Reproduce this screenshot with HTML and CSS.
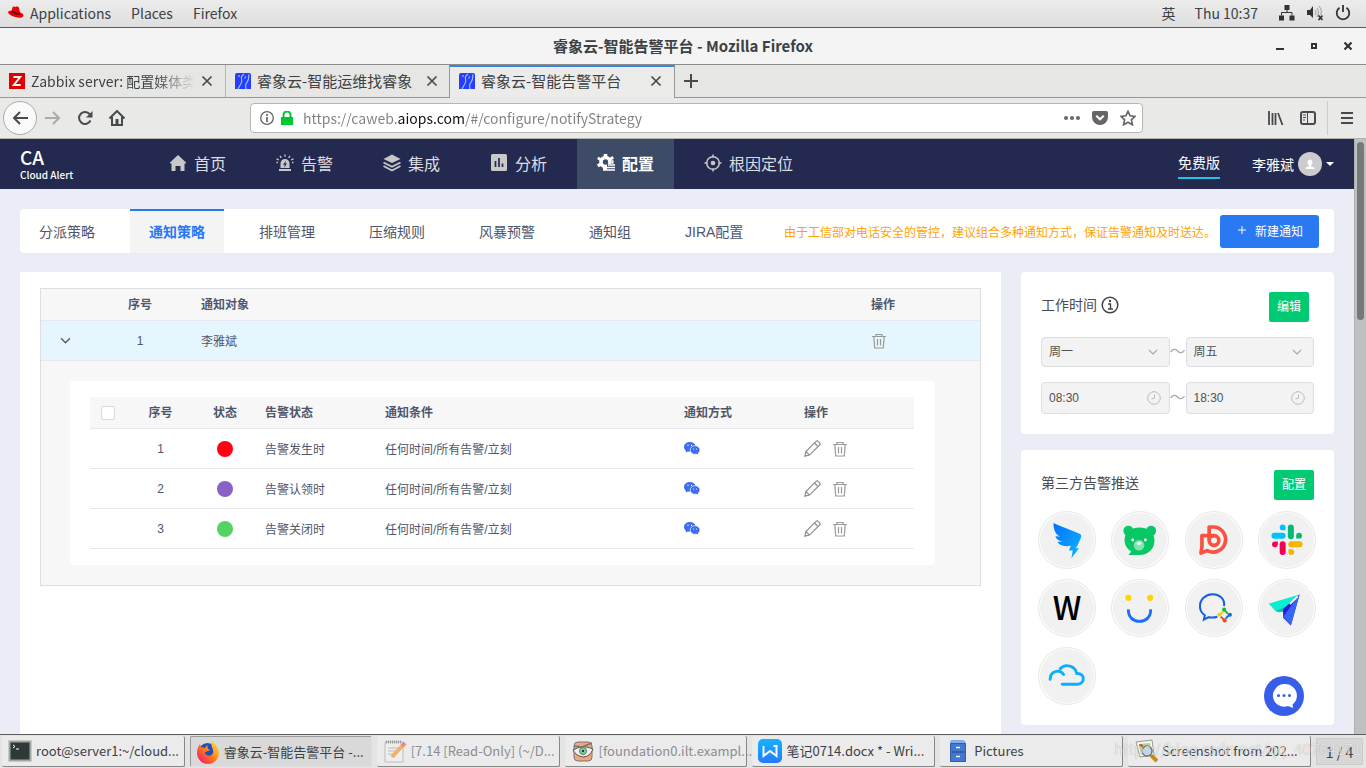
FILE: index.html
```
<!DOCTYPE html>
<html lang="zh-CN">
<head>
    <meta charset="UTF-8">
    <meta name="viewport" content="width=device-width, initial-scale=1.0">
    <title>睿象云-智能告警平台</title>
    <link rel="stylesheet" href="styles.css">
</head>
<body>
    <!-- shared icons -->
    <svg class="symbols" aria-hidden="true">
        <symbol id="i-trash" viewBox="0 0 16 16"><path d="M1 3.5h14M5 3V1.5h6V3M2.8 3.5l.9 11.5h8.6l.9-11.5M6.5 6v6.5M9.5 6v6.5" fill="none" stroke="#999" stroke-width="1.2"/></symbol>
        <symbol id="i-edit" viewBox="0 0 16 16"><path d="M.8 15.2l1-4.4L11.3 1.3q1-1 2 0l1.4 1.4q1 1 0 2L5.2 14.2zM9.8 2.8l3.4 3.4M1.8 10.8l3.4 3.4" fill="none" stroke="#8c8c8c" stroke-width="1.1"/></symbol>
        <symbol id="i-wechat" viewBox="0 0 16 13"><path d="M5.8 0C2.500 0 0 2.200 0 5c0 1.600.8 2.900 2 3.800L1.600 10.500l2.200-1.100q1 .3 2 .3 0-5.500 5.800-6.100C10.800 1.400 8.500 0 5.800 0z" fill="#3f6df0"/><ellipse cx="11" cy="8" rx="4.900" ry="4.200" fill="#3f6df0" stroke="#fff" stroke-width=".5"/><path d="M12 11.500l2.200 1.300-.5-2z" fill="#3f6df0"/><g fill="#fff"><circle cx="4" cy="3.300" r=".7"/><circle cx="7.500" cy="3.300" r=".7"/><circle cx="9.400" cy="7" r=".6"/><circle cx="12.500" cy="7" r=".6"/></g></symbol>
        <symbol id="i-close" viewBox="0 0 12 12"><path d="M1.500 1.500l9 9M10.500 1.500l-9 9" fill="none" stroke="#474b4c" stroke-width="1.700"/></symbol>
        <symbol id="i-ruixiang" viewBox="0 0 16 16"><path d="M2 0h12q2 0 2 2v14H0V2q0-2 2-2z" fill="#2c3cff"/><path d="M3 16C5 12 8 9 6.500 6 6 4.500 7 2.500 9 1M9.500 5.500l1.500-2M13.500 1.500C15 6 12 9 11 11c-.7 1.500-.3 3 0 5" fill="none" stroke="#8ed3ff" stroke-width="1.100"/><circle cx="4" cy="3" r=".7" fill="#fff"/></symbol>
        <symbol id="i-down" viewBox="0 0 10 10"><path d="M1 3l4 4 4-4" fill="none" stroke="currentColor" stroke-width="1.200"/></symbol>
        <symbol id="i-clock" viewBox="0 0 14 14"><circle cx="7" cy="7" r="6.300" fill="none" stroke="#b8bbc4"/><path d="M7.500 3.500v4h-3" fill="none" stroke="#b8bbc4"/></symbol>
    </svg>

    <!-- desktop top bar -->
    <header class="desktop-bar">
        <nav class="desktop-menu">
            <button type="button">
                <svg width="16" height="13" viewBox="0 0 16 13"><path d="M4.500 1.500C5 .2 6 .5 7.500 1c1-.8 3-.3 3.500.8l1 4.400c2.500 1 3.800 2.400 3.400 3.700-.5 1.800-4 2.200-7.400 1.300C3.500 10.200-.2 7.800.2 6c.2-1 1.500-1.500 3.300-1.300z" fill="#f00000"/><path d="M3.700 4.800c1.200 2 5.500 3.600 8.100 2.700" fill="none" stroke="#222" stroke-width="1.500"/></svg>
                Applications
            </button>
            <button type="button">Places</button>
            <button type="button">Firefox</button>
        </nav>
        <div class="desktop-status">
            <span>英</span>
            <time>Thu 10:37</time>
            <svg width="16" height="16" viewBox="0 0 16 16"><path d="M5.500 0h5v5h-5zM0 10.500h5v5H0zM10.500 10.500h5v5h-5z" fill="#2e3436"/><path d="M8 5v3M2.500 10.500V7.500h10.500v3" fill="none" stroke="#2e3436"/></svg>
            <svg width="16" height="16" viewBox="0 0 16 16"><path d="M0 5h3l3-4v12L3 10H0z" fill="#2e3436"/><path d="M8 5q2 2.500 0 5M10 3q3 4 0 9M12 1q4 5 1.500 9" fill="none" stroke="#aaa" stroke-width="1.200"/><path d="M11.500 10.500l4 4.500M15.500 10.500l-4 4.500" stroke="#2e3436" stroke-width="1.800"/></svg>
            <svg width="16" height="16" viewBox="0 0 16 16"><path d="M4.500 2.800a6.300 6.300 0 1 0 7 0M8 0v7" fill="none" stroke="#2e3436" stroke-width="1.800"/></svg>
        </div>
    </header>

    <!-- window title -->
    <div class="title-bar">
        <h1>睿象云-智能告警平台 - Mozilla Firefox</h1>
        <div class="window-buttons">
            <button type="button" aria-label="Minimize"><svg width="10" height="10" viewBox="0 0 10 10"><path d="M1 8h8" stroke="#2e3436" stroke-width="2"/></svg></button>
            <button type="button" aria-label="Maximize"><svg width="10" height="10" viewBox="0 0 10 10"><path d="M3 3h4v4H3z" fill="none" stroke="#2e3436" stroke-width="2"/></svg></button>
            <button type="button" aria-label="Close"><svg width="10" height="10" viewBox="0 0 10 10"><path d="M1.500 1.500l7 7M8.500 1.500l-7 7" stroke="#2e3436" stroke-width="2.200"/></svg></button>
        </div>
    </div>

    <!-- browser tabs -->
    <div class="browser-tabs">
        <div class="browser-tab">
            <svg width="16" height="16" viewBox="0 0 16 16"><path d="M0 0h16v16H0z" fill="#e00000"/><path d="M4.500 4h6.800L4.800 12h6.900" fill="none" stroke="#fff" stroke-width="1.900"/></svg>
            <span class="tab-title faded">Zabbix server: 配置媒体类</span>
            <button type="button" aria-label="Close tab"><svg width="12" height="12"><use href="#i-close"/></svg></button>
        </div>
        <div class="browser-tab divided">
            <svg width="16" height="16"><use href="#i-ruixiang"/></svg>
            <span class="tab-title">睿象云-智能运维找睿象</span>
            <button type="button" aria-label="Close tab"><svg width="12" height="12"><use href="#i-close"/></svg></button>
        </div>
        <div class="browser-tab current">
            <svg width="16" height="16"><use href="#i-ruixiang"/></svg>
            <span class="tab-title">睿象云-智能告警平台</span>
            <button type="button" aria-label="Close tab"><svg width="12" height="12"><use href="#i-close"/></svg></button>
        </div>
        <button type="button" class="new-tab" aria-label="New tab"><svg width="14" height="14" viewBox="0 0 14 14"><path d="M7 0v14M0 7h14" stroke="#474b4c" stroke-width="2"/></svg></button>
    </div>

    <!-- browser toolbar -->
    <div class="toolbar">
        <div class="nav-buttons">
            <button type="button" class="back" aria-label="Back"><svg width="16" height="16" viewBox="0 0 16 16"><path d="M16 8H2M8 2L2 8l6 6" fill="none" stroke="#474b4c" stroke-width="2"/></svg></button>
            <button type="button" aria-label="Forward"><svg width="16" height="16" viewBox="0 0 16 16"><path d="M0 8h14M8 2l6 6-6 6" fill="none" stroke="#aaa" stroke-width="2"/></svg></button>
            <button type="button" aria-label="Reload"><svg width="16" height="16" viewBox="0 0 16 16"><path d="M13 4.500A6 6 0 1 0 13.500 10.500" fill="none" stroke="#474b4c" stroke-width="2"/><path d="M15.500 1v6.500H9z" fill="#474b4c"/></svg></button>
            <button type="button" aria-label="Home"><svg width="16" height="16" viewBox="0 0 16 16"><path d="M0.500 8.500L8 1l7.500 7.500M3 7v8h10V7" fill="none" stroke="#474b4c" stroke-width="2"/><path d="M6.500 9h3v6h-3z" fill="#474b4c"/></svg></button>
        </div>
        <div class="url-bar">
            <svg width="14" height="14" viewBox="0 0 14 14"><circle cx="7" cy="7" r="6.300" fill="none" stroke="#666" stroke-width="1.300"/><path d="M7 6v5M7 3v2" stroke="#666" stroke-width="1.700"/></svg>
            <svg width="12" height="14" viewBox="0 0 12 14"><path d="M0 6h12v8H0z" fill="#00c832"/><path d="M2.500 6.500V4a3.500 3.500 0 0 1 7 0v2.500" fill="none" stroke="#00c832" stroke-width="2"/></svg>
            <input type="text" aria-label="Address" value="https://caweb.aiops.com/#/configure/notifyStrategy">
            <button type="button" aria-label="Page actions"><svg width="16" height="16" viewBox="0 0 16 16"><g fill="#666"><circle cx="2" cy="8" r="2"/><circle cx="8" cy="8" r="2"/><circle cx="14" cy="8" r="2"/></g></svg></button>
            <button type="button" aria-label="Pocket"><svg width="16" height="16" viewBox="0 0 16 16"><path d="M1.500 1h13Q16 1 16 2.500V7A8 8 0 0 1 0 7V2.500Q0 1 1.500 1z" fill="#666"/><path d="M4.300 5.800L8 9.300l3.700-3.500" fill="none" stroke="#fff" stroke-width="2"/></svg></button>
            <button type="button" aria-label="Bookmark"><svg width="16" height="16" viewBox="0 0 16 16"><path d="M8 1.300l2.100 4.500 4.900.6-3.600 3.400 1 4.900L8 12.300l-4.400 2.400 1-4.900L1 6.400l4.900-.6z" fill="none" stroke="#666" stroke-width="1.700"/></svg></button>
        </div>
        <div class="tool-buttons">
            <button type="button" aria-label="Library"><svg width="16" height="16" viewBox="0 0 16 16"><path d="M1 1v14M4.500 3v12M7.500 3v12M10 3l4.500 12" fill="none" stroke="#474b4c" stroke-width="1.800"/></svg></button>
            <button type="button" aria-label="Sidebars"><svg width="16" height="16" viewBox="0 0 16 16"><rect x="1" y="2" width="14" height="12" rx="2" fill="none" stroke="#474b4c" stroke-width="2"/><path d="M7.500 2v12M3 5h3M3 7.500h3M3 10h2" stroke="#474b4c"/></svg></button>
            <button type="button" class="menu" aria-label="Menu"><svg width="14" height="14" viewBox="0 0 14 14"><path d="M1 2h12M1 7h12M1 12h12" stroke="#474b4c" stroke-width="2"/></svg></button>
        </div>
    </div>

    <!-- web page -->
    <div class="viewport">
        <div class="page">
            <header class="app-header">
                <a class="logo" href="#"><strong>CA</strong><span>Cloud Alert</span></a>
                <nav class="app-nav">
                    <a href="#"><svg width="18" height="18" viewBox="0 0 18 18"><path d="M9 1l8 7.500v1h-1.500V17h-4v-5h-5v5h-4V9.500H1v-1z" fill="#c8c8c8"/></svg>首页</a>
                    <a href="#"><svg width="18" height="18" viewBox="0 0 18 18"><path d="M4.500 14V9.500a4.500 4.500 0 0 1 9 0V14zM3 15h12v2H3z" fill="#c8c8c8"/><path d="M9 .5v2.300M4 1.800l1.300 2M14 1.800l-1.300 2M.5 4.800l2.300 1M17.500 4.800l-2.300 1M.5 8.500h1.500M16 8.500h1.500" stroke="#c8c8c8" stroke-width="1.300"/><path d="M10.200 6.500L7 10.800h1.800L8 14l3-4.500H9.300z" fill="#24294f"/></svg>告警</a>
                    <a href="#"><svg width="18" height="18" viewBox="0 0 18 18"><path d="M9 .5l8.500 4.500L9 9 .5 5z" fill="#c8c8c8"/><path d="M.5 8.500L9 12.800l8.500-4.300M.5 12L9 16.500 17.500 12" fill="none" stroke="#c8c8c8" stroke-width="1.800"/></svg>集成</a>
                    <a href="#"><svg width="18" height="18" viewBox="0 0 18 18"><rect x="1" y="0" width="16" height="17" rx="1.500" fill="#c8c8c8"/><path d="M5.500 7v6M9 4v9M12.500 9.500V13" stroke="#24294f" stroke-width="1.700"/></svg>分析</a>
                    <a href="#" class="active"><svg width="18" height="18" viewBox="0 0 18 18"><circle cx="8.500" cy="8" r="4.500" fill="none" stroke="#fff" stroke-width="3.600"/><g stroke="#fff" stroke-width="3.500"><path d="M6.700 1.500h3.600M1.800 6l1-2.500M14 3l1.500 2.500M1.500 9.500L3 12.500M6 15h4M15 8h1.500"/></g><path d="M10 10h8v7h-8z" fill="#3d4b66"/><path d="M11 11h7M10 13.500h8M10 16h8" stroke="#fff" stroke-width="1.300"/></svg>配置</a>
                    <a href="#"><svg width="18" height="18" viewBox="0 0 18 18"><circle cx="9" cy="9" r="6.300" fill="none" stroke="#c8c8c8" stroke-width="1.500"/><circle cx="9" cy="9" r="2.300" fill="#c8c8c8"/><path d="M9 .5v3M9 14.500v3M.5 9h3M14.500 9h3" stroke="#c8c8c8" stroke-width="1.500"/></svg>根因定位</a>
                </nav>
                <div class="account">
                    <a class="plan" href="#">免费版</a>
                    <button type="button" class="user">
                        李雅斌
                        <svg width="24" height="24" viewBox="0 0 24 24"><circle cx="12" cy="12" r="12" fill="#ccc"/><path d="M12 7.500c3 0 3 4.500 1 6v1c2 .3 3.500.8 3.500 2.500h-9c0-1.700 1.500-2.200 3.500-2.500v-1c-2-1.500-2-6 1-6z" fill="#fff"/></svg>
                        <span class="caret"></span>
                    </button>
                </div>
            </header>

            <main>
                <div class="sub-nav">
                    <nav>
                        <a href="#">分派策略</a>
                        <a href="#" class="active">通知策略</a>
                        <a href="#">排班管理</a>
                        <a href="#">压缩规则</a>
                        <a href="#">风暴预警</a>
                        <a href="#">通知组</a>
                        <a href="#">JIRA配置</a>
                    </nav>
                    <p>由于工信部对电话安全的管控，建议组合多种通知方式，保证告警通知及时送达。</p>
                    <button type="button" class="btn-primary"><svg width="8" height="8" viewBox="0 0 8 8"><path d="M4 0v8M0 4h8" stroke="#fff"/></svg>新建通知</button>
                </div>

                <div class="columns">
                    <section class="panel">
                        <table class="outer-table">
                            <colgroup><col class="c-expand"><col class="c-no"><col><col class="c-ops"></colgroup>
                            <thead>
                                <tr><th></th><th class="center">序号</th><th>通知对象</th><th>操作</th></tr>
                            </thead>
                            <tbody>
                                <tr class="selected">
                                    <td class="center"><button type="button" class="icon-btn" aria-label="收起"><svg width="11" height="11"><use href="#i-down"/></svg></button></td>
                                    <td class="center">1</td>
                                    <td>李雅斌</td>
                                    <td><button type="button" class="icon-btn" aria-label="删除"><svg width="16" height="16"><use href="#i-trash"/></svg></button></td>
                                </tr>
                                <tr class="expanded">
                                    <td colspan="4">
                                        <div class="inner-panel">
                                            <table class="inner-table">
                                                <colgroup><col class="c-check"><col class="c-num"><col class="c-dot"><col class="c-mid"><col><col class="c-mid"><col class="c-mid"></colgroup>
                                                <thead>
                                                    <tr><th class="check"><input type="checkbox" aria-label="全选"></th><th class="center">序号</th><th class="center">状态</th><th>告警状态</th><th>通知条件</th><th>通知方式</th><th>操作</th></tr>
                                                </thead>
                                                <tbody>
                                                    <tr>
                                                        <td></td><td class="center">1</td><td class="center"><span class="dot red"></span></td><td>告警发生时</td><td>任何时间/所有告警/立刻</td>
                                                        <td><svg width="16" height="13"><use href="#i-wechat"/></svg></td>
                                                        <td><div class="ops"><button type="button" class="icon-btn" aria-label="编辑"><svg width="17" height="17"><use href="#i-edit"/></svg></button><button type="button" class="icon-btn" aria-label="删除"><svg width="16" height="16"><use href="#i-trash"/></svg></button></div></td>
                                                    </tr>
                                                    <tr>
                                                        <td></td><td class="center">2</td><td class="center"><span class="dot purple"></span></td><td>告警认领时</td><td>任何时间/所有告警/立刻</td>
                                                        <td><svg width="16" height="13"><use href="#i-wechat"/></svg></td>
                                                        <td><div class="ops"><button type="button" class="icon-btn" aria-label="编辑"><svg width="17" height="17"><use href="#i-edit"/></svg></button><button type="button" class="icon-btn" aria-label="删除"><svg width="16" height="16"><use href="#i-trash"/></svg></button></div></td>
                                                    </tr>
                                                    <tr>
                                                        <td></td><td class="center">3</td><td class="center"><span class="dot green"></span></td><td>告警关闭时</td><td>任何时间/所有告警/立刻</td>
                                                        <td><svg width="16" height="13"><use href="#i-wechat"/></svg></td>
                                                        <td><div class="ops"><button type="button" class="icon-btn" aria-label="编辑"><svg width="17" height="17"><use href="#i-edit"/></svg></button><button type="button" class="icon-btn" aria-label="删除"><svg width="16" height="16"><use href="#i-trash"/></svg></button></div></td>
                                                    </tr>
                                                </tbody>
                                            </table>
                                        </div>
                                    </td>
                                </tr>
                            </tbody>
                        </table>
                    </section>

                    <aside>
                        <section class="card work-time">
                            <div class="card-head">
                                <h2>工作时间 <svg width="18" height="18" viewBox="0 0 18 18"><circle cx="9" cy="9" r="7.800" fill="none" stroke="#444" stroke-width="1.500"/><path d="M7 8h2.500v5M7 13h5" fill="none" stroke="#444" stroke-width="1.400"/><circle cx="9" cy="5" r="1.200" fill="#444"/></svg></h2>
                                <button type="button" class="btn-green">编辑</button>
                            </div>
                            <div class="range">
                                <label class="field"><select aria-label="开始日"><option>周一</option></select><svg width="10" height="10"><use href="#i-down"/></svg></label>
                                <span>～</span>
                                <label class="field"><select aria-label="结束日"><option>周五</option></select><svg width="10" height="10"><use href="#i-down"/></svg></label>
                            </div>
                            <div class="range times">
                                <label class="field"><input type="text" aria-label="开始时间" value="08:30"><svg width="14" height="14"><use href="#i-clock"/></svg></label>
                                <span>～</span>
                                <label class="field"><input type="text" aria-label="结束时间" value="18:30"><svg width="14" height="14"><use href="#i-clock"/></svg></label>
                            </div>
                        </section>

                        <section class="card push">
                            <div class="card-head">
                                <h2>第三方告警推送</h2>
                                <button type="button" class="btn-green">配置</button>
                            </div>
                            <div class="apps">
                                <!-- dingtalk -->
                                <a href="#" aria-label="钉钉"><svg viewBox="0 0 58 58"><defs><linearGradient id="ding" x1="0" y1="0" x2="1" y2="1"><stop offset="0" stop-color="#0070ff"/><stop offset="1" stop-color="#10b8ff"/></linearGradient></defs><path d="M15 11.500c8 4 18 7 27 11 2 1 2 2 1.500 4l-3.500 8-2 3h3.500L33.500 48l1.500-8h-4l2-5c-6 1-11 0-14-4l6-1c-5 0-7-2-8-5l5 .5c-5-2-7-7-7-14z" fill="url(#ding)"/></svg></a>
                                <!-- bear -->
                                <a href="#" aria-label="倍洽"><svg viewBox="0 0 58 58"><g fill="#07c864"><circle cx="17" cy="19.500" r="5.200"/><circle cx="40.500" cy="19.500" r="5.200"/><path d="M28.500 16C38 16 44 21 44 29.500S38 44.500 28 44.500H17l3-3.500c-4.500-3-7-7-7-11.500C13 21 19 16 28.500 16z"/></g><circle cx="28" cy="34.500" r="5.500" fill="#83e2b1"/><ellipse cx="28" cy="32.500" rx="2.500" ry="1.500" fill="#fff"/><circle cx="21.500" cy="29" r="1.500" fill="#fff"/><circle cx="34.500" cy="29" r="1.500" fill="#fff"/></svg></a>
                                <!-- red chat -->
                                <a href="#" aria-label="即时通讯"><svg viewBox="0 0 58 58"><path d="M24 29V15.500h5A13 13 0 1 1 22 40l-6.500 2.500L16.500 36V24.500H29" fill="none" stroke="#fb5140" stroke-width="3.800" stroke-linejoin="round"/><circle cx="29" cy="29.500" r="5" fill="none" stroke="#fb5140" stroke-width="3.800"/></svg></a>
                                <!-- slack -->
                                <a href="#" aria-label="Slack"><svg viewBox="0 0 58 58"><g fill="none" stroke-width="6.200" stroke-linecap="round"><path d="M16 24.500h8.500" stroke="#00c2f8"/><path d="M33 16v9" stroke="#07b979"/><path d="M33.500 33.500h8.500" stroke="#f4b400"/><path d="M24.500 33.500v8" stroke="#f60055"/></g><path d="M21.500 16a3 3 0 0 1 6 0v3h-3a3 3 0 0 1-3-3z" fill="#00c2f8"/><path d="M38.500 27.500v-3a3 3 0 1 1 3 3z" fill="#07b979"/><path d="M30.500 38.500h3a3 3 0 1 1-3 3z" fill="#f4b400"/><path d="M19.500 30.500v3a3 3 0 1 1-3-3z" fill="#f60055"/></svg></a>
                                <a href="#" aria-label="W" class="letter">W</a>
                                <!-- smile -->
                                <a href="#" aria-label="有度"><svg viewBox="0 0 58 58"><circle cx="17" cy="18.500" r="3.200" fill="#ffd400"/><circle cx="39.500" cy="18.500" r="3.200" fill="#ffd400"/><path d="M17 30.500c-1 16.500 24 16.500 23 0" fill="none" stroke="#176fff" stroke-width="3"/></svg></a>
                                <!-- wecom -->
                                <a href="#" aria-label="企业微信"><svg viewBox="0 0 58 58"><path d="M39.500 27C41 10 13.500 11 14.500 28c.2 4 2 6.500 5 8.500l-1 4.500 5-2.500q5 1 9-.5" fill="none" stroke="#175ee5" stroke-width="2.100"/><path d="M35 36l4-4" stroke="#f8cc00" stroke-width="2"/><path d="M39.500 31l4 4" stroke="#16bd29" stroke-width="2"/><path d="M45 36l-4 4" stroke="#1768e5" stroke-width="2"/><path d="M36 38l4 4" stroke="#f74323" stroke-width="2"/><circle cx="34.500" cy="36" r="2.100" fill="#f8cc00"/><circle cx="39.500" cy="30.500" r="2.100" fill="#16bd29"/><circle cx="45.500" cy="36" r="2.100" fill="#1768e5"/><circle cx="40" cy="42" r="2.100" fill="#f74323"/></svg></a>
                                <!-- feishu -->
                                <a href="#" aria-label="飞书"><svg viewBox="0 0 58 58"><path d="M10 24.500L42 15 27 31q-5 4-10 1z" fill="#08efd1"/><path d="M17 32l16-7-6 7q-5 2-10 0z" fill="#00cba8"/><path d="M25 30l17-15-9 32-8-8z" fill="#2819d8"/><path d="M42 15L25 38l8 9z" fill="#3467f5"/><path d="M32 25l8-8" stroke="#fff" stroke-width="2"/></svg></a>
                                <!-- cloud -->
                                <a href="#" aria-label="云之家"><svg viewBox="0 0 58 58"><path d="M11.500 32.500c0-9 10-11 14-5M22 21.500c5-6 16-3 17 5 9-1 9 11 1 11H24" fill="none" stroke="#0daeff" stroke-width="3" stroke-linecap="round" stroke-linejoin="round"/></svg></a>
                            </div>
                        </section>
                    </aside>
                </div>
            </main>
            <button type="button" class="chat-btn" aria-label="在线客服"><svg width="40" height="40" viewBox="0 0 40 40"><path d="M28.500 28.500l.5 3.500-5-2q-5 1.800-10-1a12 11.500 0 1 1 14.500-.5z" fill="#fff"/><g fill="#375ee9"><circle cx="14.500" cy="19.500" r="1.500"/><circle cx="20" cy="19.500" r="1.500"/><circle cx="25.500" cy="19.500" r="1.500"/></g></svg></button>
        </div>
        <div class="scrollbar"><div class="thumb"></div></div>
    </div>

    <!-- window list -->
    <footer class="taskbar">
        <button type="button" class="task"><svg width="24" height="24" viewBox="0 0 24 24"><path d="M1.500 2.500h21v19h-21z" fill="#2e3a3a" stroke="#a5a59f" stroke-width="2"/><path d="M5 6l2 1.500L5 9M8 10h3" fill="none" stroke="#fff"/></svg><span>root@server1:~/cloud...</span></button>
        <button type="button" class="task pressed"><svg width="24" height="24" viewBox="0 0 24 24"><defs><linearGradient id="fox" x1="1" y1="0" x2="0" y2="1"><stop offset="0" stop-color="#fff44f"/><stop offset=".5" stop-color="#ff7b1c"/><stop offset="1" stop-color="#f0037f"/></linearGradient></defs><circle cx="11.500" cy="12" r="9" fill="#1f4fb8"/><path d="M16 1c2 2 7 6 7 12a11 11 0 0 1-22 0c0-4 1-6 3-9l1 3 4 1 2-3c1 2 0 4 3 5-2 2-5 1-5 3 2 4 7 3 8 0 1-5-3-6-1-12z" fill="url(#fox)"/></svg><span>睿象云-智能告警平台 -...</span></button>
        <button type="button" class="task dimmed"><svg width="24" height="24" viewBox="0 0 24 24"><path d="M2 3h18v20H2z" fill="#eee" stroke="#bbb"/><path d="M3 3h16" stroke="#999" stroke-width="3" stroke-dasharray="1 1"/><path d="M5 9h11M5 12h9M5 15h7" stroke="#bbb"/><path d="M9 18L20 6" stroke="#f1b267" stroke-width="4"/><path d="M19 7l3-3" stroke="#e58b88" stroke-width="4"/></svg><span>[7.14 [Read-Only] (~/D...</span></button>
        <button type="button" class="task dimmed"><svg width="24" height="24" viewBox="0 0 24 24"><rect x="3" y="3" width="18" height="19" rx="4" fill="#f3a57e" stroke="#777"/><path d="M2 11q10-6 20-1-3 8-10 8Q5 17 2 11z" fill="#eee" stroke="#555"/><circle cx="12" cy="12" r="3.500" fill="#9acb97" stroke="#468565"/><circle cx="12" cy="12" r="1.200" fill="#333"/><path d="M3 7l8 1 10-4" fill="none" stroke="#777" stroke-width="1.500"/></svg><span>[foundation0.ilt.exampl...</span></button>
        <button type="button" class="task"><svg width="24" height="24" viewBox="0 0 24 24"><defs><linearGradient id="wps" x1="0" y1="0" x2="0" y2="1"><stop offset="0" stop-color="#17b2ff"/><stop offset="1" stop-color="#237bff"/></linearGradient></defs><rect width="24" height="24" rx="5" fill="url(#wps)"/><path d="M5.500 7v10l6.500-5 6.500 5V7h-3" fill="none" stroke="#fff" stroke-width="1.900"/></svg><span>笔记0714.docx * - Wri...</span></button>
        <button type="button" class="task"><svg width="24" height="24" viewBox="0 0 24 24"><path d="M5 1h13l2 3v19H4V4z" fill="#80aee6"/><path d="M4.500 4.500h15v8h-15zM4.500 13.500h15v9h-15z" fill="#4378cf" stroke="#315da9"/><path d="M10 8.500h4M10 17.500h4" stroke="#fff" stroke-width="1.500"/></svg><span>Pictures</span></button>
        <button type="button" class="task"><svg width="24" height="24" viewBox="0 0 24 24"><path d="M2 3l16-2 2 15-14 2z" fill="#f7f7f2" stroke="#999"/><path d="M5 5l11-1 1 9-10 2z" fill="#b3d685"/><circle cx="7" cy="7" r="2" fill="#d24a35"/><circle cx="13" cy="12" r="5" fill="#c0d7ee" stroke="#687887" stroke-width="1.500"/><path d="M17 16l6 6" stroke="#c48c14" stroke-width="4"/></svg><span>Screenshot from 202...</span></button>
        <button type="button" class="workspace">1 / 4</button>
        <span class="watermark">https://blog.csdn.net/qq_40764171</span>
    </footer>
</body>
</html>
```
FILE: styles.css
```
* {
    box-sizing: border-box;
}

body {
    margin: 0;
    height: 100vh;
    display: flex;
    flex-direction: column;
    overflow: hidden;
    font-family: "Liberation Sans", "Noto Sans CJK SC", sans-serif;
    font-size: 12px;
    color: #505669;
}

button, input, select {
    font: inherit;
    color: inherit;
    margin: 0;
    padding: 0;
    border: none;
    background: none;
}

button {
    display: flex;
    align-items: center;
    cursor: pointer;
}

a {
    color: inherit;
    text-decoration: none;
}

svg {
    display: block;
    flex-shrink: 0;
}

h1, h2, p {
    margin: 0;
}

.symbols {
    width: 0;
    height: 0;
    position: absolute;
}

/* Desktop */
.desktop-bar, .title-bar, .browser-tabs, .toolbar, .taskbar {
    flex-shrink: 0;
    display: flex;
    align-items: center;
    font-family: "Noto Sans CJK SC", sans-serif;
    font-size: 14px;
    line-height: 20px;
    color: #3c4143;
}

.desktop-bar {
    height: 28px;
    justify-content: space-between;
    padding: 0 15px 2px 8px;
    background: linear-gradient(#ececec, #dedede);
    border-bottom: 1px solid #5c5c5c;
}

.desktop-menu, .desktop-status {
    display: flex;
    align-items: center;
}

.desktop-menu {
    gap: 20px;
}

.desktop-menu button {
    gap: 6px;
}

.desktop-status {
    gap: 12px;
}

.desktop-status time {
    margin: 0 9px 0 7px;
}

.title-bar {
    height: 37px;
    padding: 0 13px;
    background: #f4f4f4;
    border-bottom: 1px solid #8c8c8c;
}

.title-bar h1 {
    flex: 1;
    padding-left: 78px;
    font-size: 15px;
    text-align: center;
}

.window-buttons {
    display: flex;
    gap: 24px;
}

.browser-tabs {
    height: 33px;
    align-items: stretch;
    background: #e6e6e4;
    border-bottom: 1px solid #979797;
    font-size: 15px;
}

.browser-tab {
    width: 225px;
    display: flex;
    align-items: center;
    gap: 6px;
    padding: 0 12px 0 9px;
}

.browser-tab.divided {
    border-left: 1px solid #b5b5b5;
}

.browser-tab.current {
    margin: 0 0 -1px -1px;
    padding-bottom: 3px;
    width: 226px;
    background: #ebebea;
    border: 1px solid #979797;
    border-top: 2px solid #3f83db;
    border-bottom: none;
}

.tab-title {
    flex: 1;
    min-width: 0;
    white-space: nowrap;
}

.tab-title.faded {
    font-size: 14px;
    -webkit-mask-image: linear-gradient(to right, #000 75%, transparent);
    mask-image: linear-gradient(to right, #000 75%, transparent);
}

.new-tab {
    padding: 0 9px;
}

/* Toolbar */
.toolbar {
    height: 41px;
    padding: 0 12px 0 3px;
    background: #e9e9e7;
    border-bottom: 1px solid #b2b2ae;
}

.nav-buttons {
    width: 247px;
    display: flex;
    align-items: center;
    gap: 16px;
}

.nav-buttons .back {
    width: 34px;
    height: 34px;
    margin-right: -8px;
    justify-content: center;
    border: 1px solid #ababab;
    border-radius: 50%;
    background: #fafafa;
}

.url-bar {
    flex: 1;
    height: 30px;
    display: flex;
    align-items: center;
    gap: 12px;
    padding: 0 6px 0 9px;
    background: #fff;
    border: 1px solid #b6b6b3;
    border-radius: 4px;
}

.url-bar svg + svg {
    margin-left: -5px;
}

/* the host part of the address is drawn darker */
.url-bar input {
    flex: 1;
    min-width: 0;
    margin-left: -2px;
    color: transparent;
    background: linear-gradient(to right, #808080 94px, #111 94px, #111 161px, #808080 161px);
    -webkit-background-clip: text;
    background-clip: text;
}

.tool-buttons {
    width: 211px;
    display: flex;
    align-items: center;
    justify-content: flex-end;
    gap: 16px;
}

.tool-buttons .menu {
    height: 34px;
    margin-left: -5px;
    padding-left: 12px;
    border-left: 1px solid #ccc;
}

/* Page */
.viewport {
    flex: 1;
    min-height: 0;
    display: flex;
}

.page {
    flex: 1;
    display: flex;
    flex-direction: column;
    position: relative;
    overflow: hidden;
    background: #eaedf6;
}

.scrollbar {
    width: 12px;
    padding: 3px 2px;
    background: #bfc1c0;
    border-left: 1px solid #aeb0af;
}

.thumb {
    height: 178px;
    width: 7px;
    border-radius: 4px;
    background: #747a7a;
}

.app-header {
    height: 50px;
    flex-shrink: 0;
    display: flex;
    align-items: center;
    padding: 0 20px;
    background: #24294f;
    color: #dcdde3;
}

.logo {
    width: 129px;
    display: flex;
    flex-direction: column;
    color: #fff;
    font-family: "Noto Sans CJK SC", sans-serif;
    font-size: 10px;
    line-height: 14px;
    font-weight: 500;
}

.logo strong {
    font-size: 19px;
    line-height: 22px;
    font-weight: 500;
}

.app-nav {
    flex: 1;
    display: flex;
    height: 100%;
    gap: 10px;
}

.app-nav a {
    display: flex;
    align-items: center;
    gap: 7px;
    padding: 0 20px 2px;
    font-size: 16px;
}

.app-nav .active {
    background: #3d4b66;
    color: #fff;
    font-weight: bold;
}

.account {
    display: flex;
    align-items: center;
    gap: 32px;
    font-size: 14px;
    color: #fff;
}

.plan {
    line-height: 28px;
    border-bottom: 2px solid #27bfe5;
}

.user {
    gap: 4px;
}

.caret {
    border: 4px solid transparent;
    border-top-color: #fff;
    border-bottom: none;
}

main {
    flex: 1;
    display: flex;
    flex-direction: column;
    gap: 19px;
    padding: 20px 20px 0;
    min-height: 0;
}

.sub-nav {
    height: 44px;
    flex-shrink: 0;
    display: flex;
    align-items: center;
    padding-right: 15px;
    background: #fff;
    border-radius: 4px;
}

.sub-nav nav {
    display: flex;
    height: 100%;
    gap: 16px;
}

.sub-nav nav a {
    display: flex;
    align-items: center;
    padding: 0 19px;
    font-size: 14px;
}

.sub-nav nav .active {
    background: #f4f4f4;
    box-shadow: inset 0 2px #2878f0;
    color: #2678f8;
    font-weight: bold;
}

.sub-nav p {
    flex: 1;
    margin-right: 4px;
    text-align: right;
    white-space: nowrap;
    color: #ffa200;
}

.btn-primary {
    height: 33px;
    gap: 9px;
    padding: 0 16px 2px 18px;
    border-radius: 3px;
    background: #2979f2;
    color: #fff;
}

.columns {
    flex: 1;
    display: flex;
    gap: 20px;
    min-height: 0;
}

.panel {
    flex: 1;
    padding: 16px 20px;
    background: #fff;
}

/* Tables */
table {
    width: 100%;
    table-layout: fixed;
    border-spacing: 0;
    border-collapse: separate;
}

th, td {
    height: 40px;
    padding: 0 10px;
    text-align: left;
    border-bottom: 1px solid #e7e8ed;
}

th {
    height: 32px;
    padding-bottom: 2px;
    background: #f7f7f7;
}

.center {
    text-align: center;
}

.center .icon-btn {
    margin: 0 auto;
}

.outer-table {
    border: 1px solid #dcdee2;
    background: #f7f7f7;
}

.selected td {
    background: #e6f6ff;
}

.expanded > td {
    padding: 20px 45px 20px 29px;
    border-bottom: none;
}

.inner-panel {
    padding: 16px 21px 16px 20px;
    border-radius: 4px;
    background: #fff;
}

.c-expand {
    width: 48px;
}

.c-no {
    width: 102px;
}

.c-ops {
    width: 119px;
}

.c-check {
    width: 36px;
}

.c-num {
    width: 69px;
}

.c-dot {
    width: 60px;
}

.c-mid {
    width: 120px;
}

.check {
    padding: 0;
}

.check input {
    display: block;
    width: 14px;
    height: 14px;
    margin: 0 auto;
    appearance: none;
    border: 1px solid #d9dbe0;
    border-radius: 2px;
    background: #fff;
}

.dot {
    display: block;
    width: 16px;
    height: 16px;
    margin: 0 auto;
    border-radius: 50%;
}

.red {
    background: #ff0014;
}

.purple {
    background: #8862c6;
}

.green {
    background: #52d364;
}

.ops {
    display: flex;
    gap: 11px;
}

/* Side cards */
aside {
    width: 313px;
    flex-shrink: 0;
    display: flex;
    flex-direction: column;
    gap: 16px;
}

.card {
    padding: 20px;
    border-radius: 4px;
    background: #fff;
}

.card-head {
    display: flex;
    align-items: flex-start;
    justify-content: space-between;
    margin-bottom: 15px;
}

.work-time .card-head {
    padding-right: 5px;
}

.card-head h2 {
    display: flex;
    align-items: center;
    gap: 4px;
    font-size: 14px;
    line-height: 26px;
    font-weight: normal;
    color: #4c4c4c;
}

.btn-green {
    height: 30px;
    padding: 0 8px 3px;
    border-radius: 2px;
    background: #00cb73;
    color: #fff;
}

.range {
    display: flex;
    align-items: center;
    color: #aaa;
}

.range span {
    width: 16px;
    display: flex;
    justify-content: center;
    font-size: 16px;
    line-height: 16px;
}

.times {
    margin-top: 15px;
}

.field {
    flex: 1;
    min-width: 0;
    height: 30px;
    display: flex;
    align-items: center;
    padding: 0 11px 0 7px;
    border: 1px solid #dcdee2;
    border-radius: 4px;
    background: #f3f3f3;
}

.times .field {
    height: 32px;
    padding-right: 8px;
}

.field select, .field input {
    flex: 1;
    min-width: 0;
    appearance: none;
    color: #515151;
}

.apps {
    display: grid;
    grid-template-columns: repeat(4, 58px);
    justify-content: space-between;
    row-gap: 10px;
    margin: -4px -2px 0 -3px;
}

.apps a {
    height: 58px;
    border: 1px solid #e9e9e9;
    border-radius: 50%;
    background: #f1f1f1;
    box-shadow: inset 0 0 0 1px #fff;
}

.apps .letter {
    display: flex;
    align-items: center;
    justify-content: center;
    padding-bottom: 4px;
    font-size: 32px;
    line-height: 40px;
    font-family: "Noto Sans CJK SC", sans-serif;
    font-weight: 500;
    color: #000;
}

.chat-btn {
    position: absolute;
    right: 50px;
    bottom: 18px;
    border-radius: 50%;
    background: #375ee9;
}

/* Taskbar */
.taskbar {
    position: relative;
    height: 34px;
    gap: 5px;
    padding: 1px 3px 1px 2px;
    background: #e4e4e3;
    border-top: 1px solid #5c5c5c;
    font-size: 13px;
}

.task {
    flex: 1;
    min-width: 0;
    height: 31px;
    gap: 4px;
    padding: 0 6px;
    background: #ebebeb;
    border-right: 1px solid #878787;
    border-bottom: 1px solid #878787;
    border-radius: 2px;
    white-space: nowrap;
}

.task.pressed {
    padding: 0 5px;
    background: #d9d9d9;
    border: 1px solid #999;
    border-right-color: #ddd;
    border-bottom-color: #ddd;
}

.task.dimmed {
    color: #8b8d8e;
}

.workspace {
    width: 47px;
    height: 27px;
    justify-content: center;
    background: #d7d7d7;
    border: 1px solid #ccc;
    font-size: 14px;
}

.watermark {
    position: absolute;
    right: 5px;
    top: 4px;
    font-size: 15px;
    color: rgba(255, 255, 255, 0.7);
    text-shadow: 0 0 1px rgba(0, 0, 0, 0.3);
    pointer-events: none;
}
```
